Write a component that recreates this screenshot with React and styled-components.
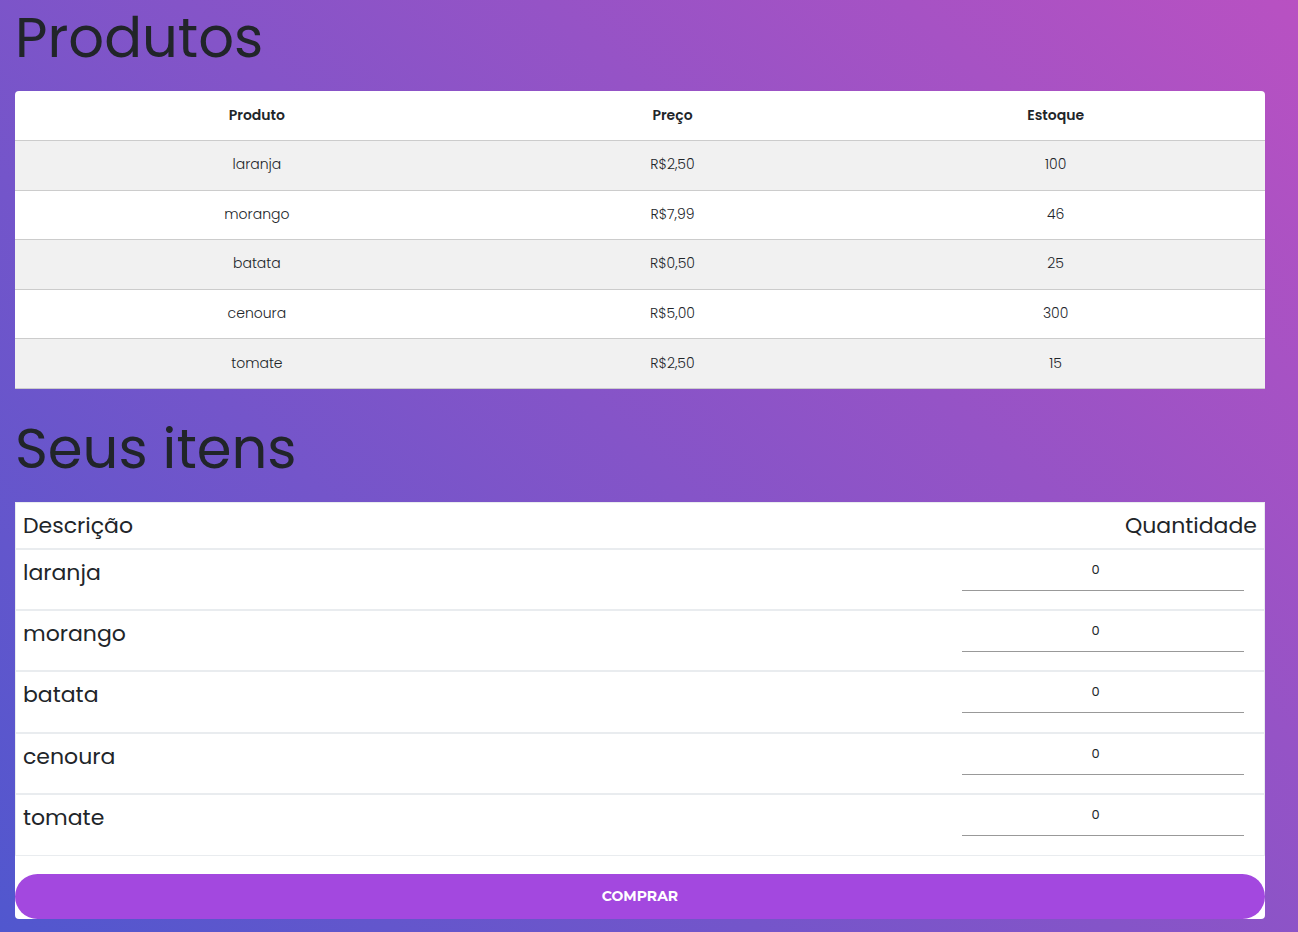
import React from "react";
import styled, { createGlobalStyle } from "styled-components";

const GlobalStyle = createGlobalStyle`
  *, *::before, *::after { box-sizing: border-box; }
  body {
    margin: 0;
    color: #212529;
    font-family: Poppins, Inter, "Liberation Sans", sans-serif;
    font-size: 14px;
    line-height: 24px;
  }
`;

const Page = styled.main`
  min-height: 100vh;
  padding: 4px 33px 13px 15px;
  background: linear-gradient(45deg, #4158d0 -15%, #c850c0 115%);
`;

const Title = styled.h1`
  margin: 0 0 20px;
  font-size: 56px;
  font-weight: 400;
  line-height: 67px;
`;

const ProductTable = styled.table`
  width: 100%;
  height: 298px;
  margin-bottom: 26px;
  table-layout: fixed;
  border-spacing: 0;
  border-radius: 4px 4px 0 0;
  overflow: hidden;
  background: #fff;
  text-align: center;

  tbody tr:nth-child(odd) { background: #f1f1f1; }
`;

const Column = styled.col`
  width: ${(p) => p.$share}%;
`;

const ProductCell = styled.td`
  height: ${(p) => (p.as ? 50 : 49)}px;
  padding: 0 0 2px;
  border-bottom: 1px solid #ccc;
  font-weight: ${(p) => (p.as ? 600 : 300)};
`;

const Order = styled.form`
  border-radius: 0 0 4px 4px;
  background: #fff;
`;

const OrderTable = styled.table`
  width: 100%;
  height: 354px;
  border: 1px solid #e9ecef;
  border-spacing: 0;
  font-size: 22px;
  line-height: 30px;
`;

const OrderHead = styled.th`
  height: 46px;
  padding: 8px 7px 7px;
  border-bottom: 1px solid #e9ecef;
  font-weight: 400;
  text-align: ${(p) => p.$align || "left"};
`;

const ItemCell = styled.td`
  height: 61px;
  padding: 8px 7px;
  border-top: 1px solid #e9ecef;
  border-bottom: ${(p) => (p.$last ? 0 : 1)}px solid #e9ecef;
  font-weight: 400;
  vertical-align: top;
`;

const QuantityCell = styled(ItemCell)`
  width: 308px;
  padding: 0 20px 0 6px;
`;

const Quantity = styled.input`
  display: block;
  width: 100%;
  height: 41px;
  padding: 0;
  border: 0;
  border-bottom: 1px solid #999;
  background: transparent;
  color: #212529;
  font: 400 13px/20px Poppins, Inter, "Liberation Sans", sans-serif;
  text-align: center;
`;

const BuyButton = styled.button`
  display: block;
  width: 100%;
  height: 45px;
  margin-top: 18px;
  padding: 0 0 2px;
  border: 0;
  border-radius: 23px;
  background: #a348df;
  color: #fff;
  font: 700 14px/20px Montserrat, Inter, "Liberation Sans", sans-serif;
  text-transform: uppercase;
  cursor: pointer;
`;

const products = [
  { name: "laranja", price: "R$2,50", stock: 100 },
  { name: "morango", price: "R$7,99", stock: 46 },
  { name: "batata", price: "R$0,50", stock: 25 },
  { name: "cenoura", price: "R$5,00", stock: 300 },
  { name: "tomate", price: "R$2,50", stock: 15 },
];

export default function App() {
  return (
    <Page>
      <GlobalStyle />
      <Title>Produtos</Title>
      <ProductTable>
        <colgroup>
          <Column $share={38.7} />
          <Column $share={27.8} />
          <Column $share={33.5} />
        </colgroup>
        <thead>
          <tr>
            <ProductCell as="th" scope="col">Produto</ProductCell>
            <ProductCell as="th" scope="col">Preço</ProductCell>
            <ProductCell as="th" scope="col">Estoque</ProductCell>
          </tr>
        </thead>
        <tbody>
          {products.map((p) => (
            <tr key={p.name}>
              <ProductCell>{p.name}</ProductCell>
              <ProductCell>{p.price}</ProductCell>
              <ProductCell>{p.stock}</ProductCell>
            </tr>
          ))}
        </tbody>
      </ProductTable>
      <Title>Seus itens</Title>
      <Order onSubmit={(e) => e.preventDefault()}>
        <OrderTable>
          <thead>
            <tr>
              <OrderHead scope="col">Descrição</OrderHead>
              <OrderHead scope="col" $align="right">Quantidade</OrderHead>
            </tr>
          </thead>
          <tbody>
            {products.map((p, i) => (
              <tr key={p.name}>
                <ItemCell $last={i === products.length - 1}>
                  <label htmlFor={`qty-${p.name}`}>{p.name}</label>
                </ItemCell>
                <QuantityCell $last={i === products.length - 1}>
                  <Quantity id={`qty-${p.name}`} type="number" min="0" defaultValue="0" />
                </QuantityCell>
              </tr>
            ))}
          </tbody>
        </OrderTable>
        <BuyButton type="submit">Comprar</BuyButton>
      </Order>
    </Page>
  );
}
